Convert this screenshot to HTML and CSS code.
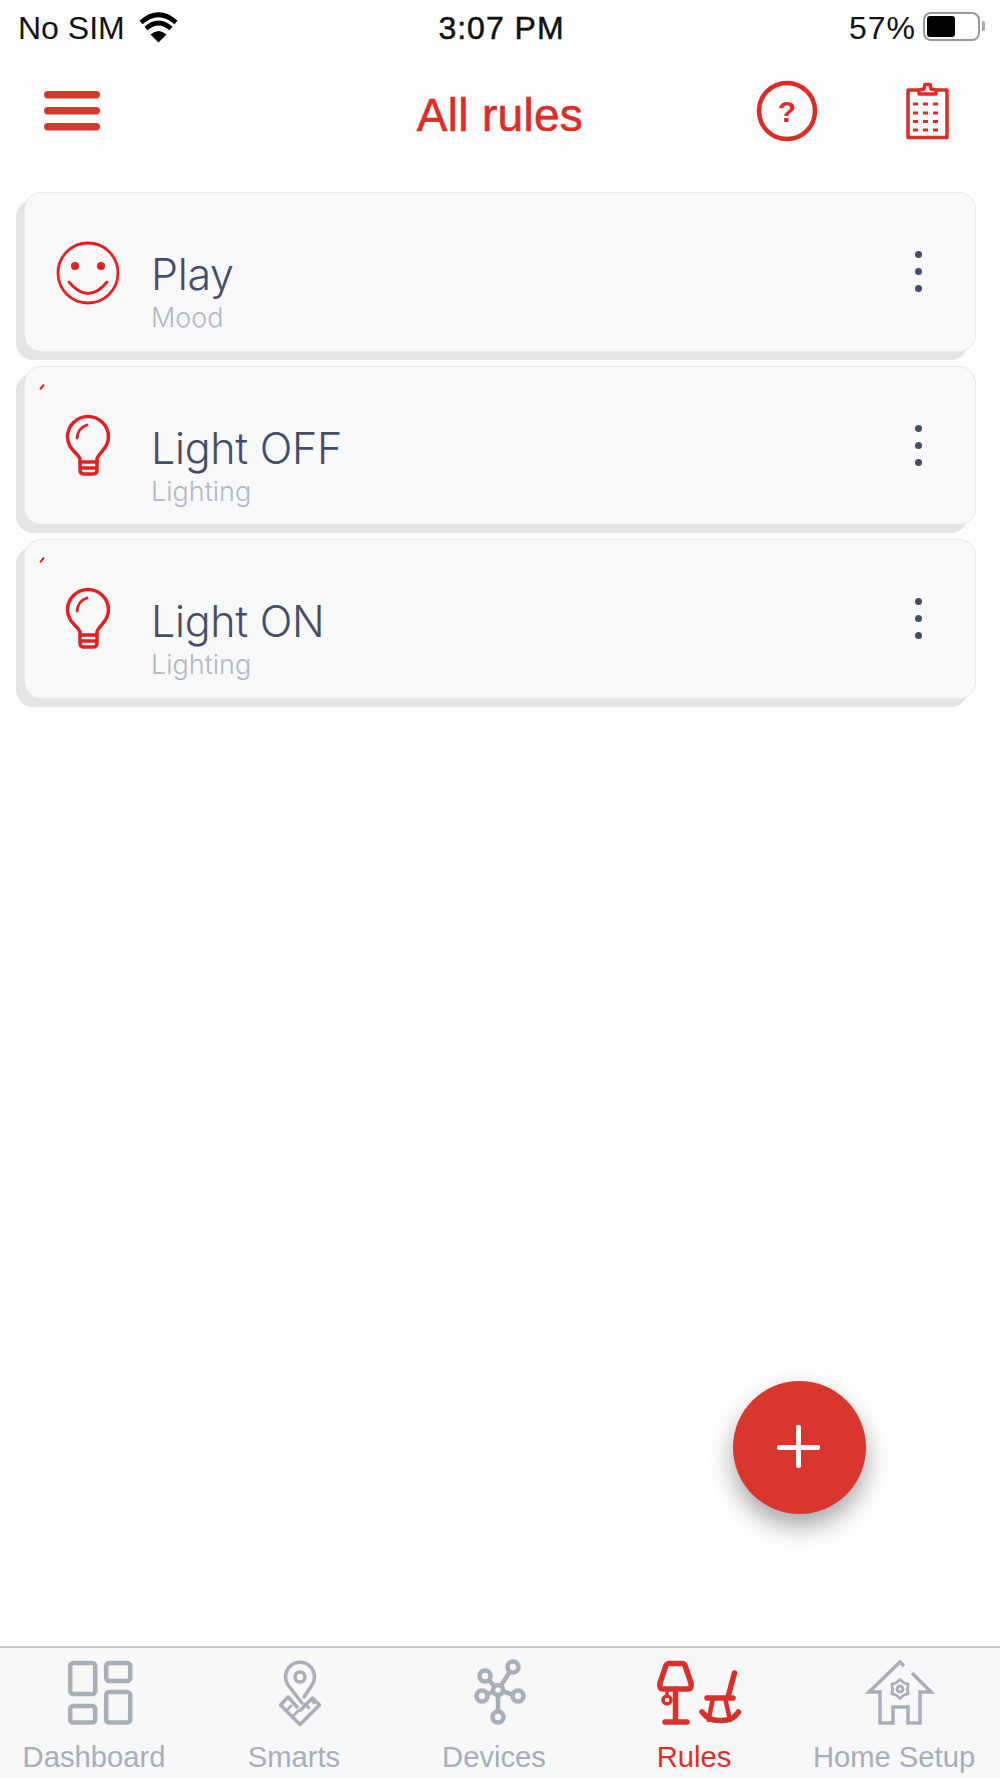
FILE: index.html
```html
<!DOCTYPE html>
<html lang="en">
<head>
<meta charset="utf-8">
<title>All rules</title>
<link rel="stylesheet" href="styles.css">
</head>
<body>
<div class="app">
  <div class="status-bar">
    <div class="status-left">
      <span>No SIM</span>
      <svg class="wifi" width="40" height="30" viewBox="139 12 40 30">
        <path class="wifi-fill" d="M158.500 41.500 L150.500 33.500 Q158.500 26.500 166.500 33.500 Z"/>
        <path class="wifi-arc" d="M146 27.500 Q158.500 16.500 171 27.500"/>
        <path class="wifi-arc" d="M141 21.500 Q158.500 6 176 21.500"/>
      </svg>
    </div>
    <div class="status-time">3:07 PM</div>
    <div class="status-right">
      <span>57%</span>
      <div class="battery"><div class="battery-level"></div></div>
      <div class="battery-nub"></div>
    </div>
  </div>

  <header class="top-bar">
    <div class="top-left">
      <svg class="menu-icon" width="56" height="42" viewBox="44 90 56 42">
        <rect class="menu-bar" x="44" y="91" width="56" height="7.500" rx="3.700"/>
        <rect class="menu-bar" x="44" y="107" width="56" height="7.500" rx="3.700"/>
        <rect class="menu-bar" x="44" y="123" width="56" height="7.500" rx="3.700"/>
      </svg>
    </div>
    <h1 class="title">All rules</h1>
    <div class="top-right">
      <svg class="help-icon" width="60" height="60" viewBox="757 81 60 60">
        <circle class="line-red line-4" cx="787" cy="111" r="28"/>
        <text class="help-mark" x="787" y="122">?</text>
      </svg>
      <svg class="sheet-icon" width="46" height="58" viewBox="905 82 46 58">
        <path class="line-red line-3" d="M918 90 H908 V137.500 H947 V90 H937"/>
        <path class="line-red line-3" d="M919 94 V90 L924 89 L925 84.500 H930 L931 89 L936 90 V94 Z"/>
        <path class="line-red line-2 dashes" d="M913 104 H943"/>
        <path class="line-red line-2 dashes" d="M913 113 H943"/>
        <path class="line-red line-2 dashes" d="M913 121.500 H943"/>
        <path class="line-red line-2 dashes" d="M913 130 H943"/>
      </svg>
    </div>
  </header>

  <main class="content">
    <ul class="rule-list">
      <li class="rule-card">
        <div class="rule-icon">
          <svg class="smile-icon" width="66" height="66" viewBox="55 239 66 66">
            <circle class="line-bright line-2" cx="88" cy="272" r="30"/>
            <circle class="dot-red" cx="75" cy="265" r="4"/>
            <circle class="dot-red" cx="101" cy="265" r="4"/>
            <path class="line-bright line-2" d="M69 281 Q88 304 107 281"/>
          </svg>
        </div>
        <div class="rule-text">
          <div class="rule-name">Play</div>
          <div class="rule-type">Mood</div>
        </div>
        <div class="rule-more"><span class="more-dot"></span><span class="more-dot"></span><span class="more-dot"></span></div>
      </li>
      <li class="rule-card">
        <span class="rule-tick"></span>
        <div class="rule-icon">
          <svg class="bulb-icon" width="54" height="66" viewBox="61 586 54 66">
            <path class="line-bright line-3" d="M80 634 V631 C78 625 67.500 621 67.500 609 A20.500 20.500 0 0 1 108.500 609 C108.500 621 98 625 97 631 V634 Z"/>
            <path class="line-bright line-3" d="M80 634 V642 Q80 646 84 646 H93 Q97 646 97 642 V634 M80 640 H97"/>
            <path class="line-bright line-2" d="M77 610 Q78 600 87 597"/>
          </svg>
        </div>
        <div class="rule-text">
          <div class="rule-name">Light OFF</div>
          <div class="rule-type">Lighting</div>
        </div>
        <div class="rule-more"><span class="more-dot"></span><span class="more-dot"></span><span class="more-dot"></span></div>
      </li>
      <li class="rule-card">
        <span class="rule-tick"></span>
        <div class="rule-icon">
          <svg class="bulb-icon" width="54" height="66" viewBox="61 586 54 66">
            <path class="line-bright line-3" d="M80 634 V631 C78 625 67.500 621 67.500 609 A20.500 20.500 0 0 1 108.500 609 C108.500 621 98 625 97 631 V634 Z"/>
            <path class="line-bright line-3" d="M80 634 V642 Q80 646 84 646 H93 Q97 646 97 642 V634 M80 640 H97"/>
            <path class="line-bright line-2" d="M77 610 Q78 600 87 597"/>
          </svg>
        </div>
        <div class="rule-text">
          <div class="rule-name">Light ON</div>
          <div class="rule-type">Lighting</div>
        </div>
        <div class="rule-more"><span class="more-dot"></span><span class="more-dot"></span><span class="more-dot"></span></div>
      </li>
    </ul>
    <button class="fab" type="button" aria-label="Add rule"><span class="fab-h"></span><span class="fab-v"></span></button>
  </main>

  <nav class="tab-bar">
    <div class="tab">
      <svg width="100" height="70" viewBox="50 1658 100 70">
        <rect class="line-grey line-thick" x="70.200" y="1663" width="25" height="31" rx="3"/>
        <rect class="line-grey line-thick" x="106.200" y="1663" width="24" height="18" rx="3"/>
        <rect class="line-grey line-thick" x="70.200" y="1706" width="25" height="16.500" rx="3"/>
        <rect class="line-grey line-thick" x="106.200" y="1692" width="24" height="30.500" rx="3"/>
      </svg>
      <span class="tab-label">Dashboard</span>
    </div>
    <div class="tab">
      <svg width="100" height="70" viewBox="250 1658 100 70">
        <path class="line-grey line-3" d="M304 1697 L312 1685 A14.500 14.500 0 1 0 288 1685 L302 1703"/>
        <circle class="line-grey line-3" cx="300" cy="1677" r="5"/>
        <path class="line-grey line-3" d="M288 1697 L280.500 1705 L300 1724.500 L319.500 1705 L312.500 1698 L300 1710.500 M288 1697 L297 1707"/>
        <path class="line-grey line-2" d="M286 1711 L291 1706 M292 1717 L298 1711 M309 1708 L305 1704 M314 1703 L311 1700"/>
      </svg>
      <span class="tab-label">Smarts</span>
    </div>
    <div class="tab">
      <svg width="100" height="70" viewBox="450 1658 100 70">
        <path class="line-grey line-thick" d="M498 1690 L513 1667 M498 1690 L485 1676 M498 1690 L482 1696 M498 1690 L518 1696 M498 1690 L498 1717"/>
        <circle class="grey-node" cx="498" cy="1690" r="5"/>
        <circle class="grey-node" cx="513" cy="1667" r="5.500"/>
        <circle class="grey-node" cx="485" cy="1676" r="5.500"/>
        <circle class="grey-node" cx="482" cy="1696" r="5.500"/>
        <circle class="grey-node" cx="518" cy="1696" r="5.500"/>
        <circle class="grey-node" cx="498" cy="1717" r="5.500"/>
      </svg>
      <span class="tab-label">Devices</span>
    </div>
    <div class="tab tab-active">
      <svg width="100" height="70" viewBox="650 1658 100 70">
        <path class="line-tab line-heavy" d="M669 1663.500 H682 Q684 1663.500 685 1665.500 L691 1683 Q692 1689 688 1689 H663 Q659 1689 660 1683 L666 1665.500 Q667 1663.500 669 1663.500 Z"/>
        <path class="line-tab line-heavy" d="M675.500 1689 V1721 M665 1722 H687"/>
        <path class="line-tab line-3" d="M667 1689 V1696"/>
        <circle class="line-tab line-3" cx="667" cy="1700" r="4"/>
        <path class="line-tab line-heavy" d="M734.500 1673 L728 1697 M707 1698 H733"/>
        <path class="line-tab line-thick" d="M713 1698 L708.500 1720 M725 1698 L730 1720"/>
        <path class="line-tab line-heavy" d="M702 1712 Q709 1721 720 1720.500 Q733 1721 738.500 1712"/>
      </svg>
      <span class="tab-label">Rules</span>
    </div>
    <div class="tab">
      <svg width="100" height="70" viewBox="850 1658 100 70">
        <path class="line-grey line-3 cap-square" d="M904 1666 L900 1662 L869 1692 H880 V1723 H893 V1707 H908 V1723 H920 V1692 H931 L912 1673"/>
        <path class="line-grey line-2" d="M900 1679.500 L903.700 1682.700 L908.200 1684.300 L907.300 1689 L908.200 1693.700 L903.700 1695.300 L900 1698.500 L896.300 1695.300 L891.800 1693.700 L892.700 1689 L891.800 1684.300 L896.300 1682.700 Z"/>
        <circle class="line-grey line-2" cx="900" cy="1689" r="3"/>
      </svg>
      <span class="tab-label">Home Setup</span>
    </div>
  </nav>
</div>
</body>
</html>
```
FILE: styles.css
```css
* { box-sizing: border-box; }
html, body { margin: 0; padding: 0; }
body { background: #fefefe; font-family: "Liberation Sans", Arial, sans-serif; }
svg { display: block; overflow: visible; }

.app { width: 1000px; height: 1778px; display: flex; flex-direction: column; overflow: hidden; }

/* Status bar */
.status-bar { height: 56px; display: grid; grid-template-columns: 1fr auto 1fr; align-items: start; padding: 12px 15px 0 18px; font-size: 32px; line-height: 32px; color: #111; }
.status-left { display: flex; align-items: flex-start; gap: 14px; }
.wifi { margin-top: 1px; }
.wifi-fill { fill: #000; }
.wifi-arc { fill: none; stroke: #000; stroke-width: 4.6; }
.status-time { font-size: 32px; letter-spacing: 1px; -webkit-text-stroke: 0.5px #111; }
.status-right { display: flex; justify-content: flex-end; align-items: flex-start; letter-spacing: 1px; }
.battery { width: 57px; height: 29px; margin-left: 7px; border: 2px solid #999; border-radius: 8px; padding: 2px; }
.battery-level { width: 28px; height: 21px; background: #000; border-radius: 3px; }
.battery-nub { width: 3px; height: 10px; margin: 9px 0 0 2px; background: #aaa; border-radius: 0 2px 2px 0; }

/* Header */
.top-bar { height: 110px; display: grid; grid-template-columns: 1fr auto 1fr; align-items: start; padding: 0 44px; }
.menu-icon { margin-top: 34px; }
.menu-bar { fill: #d9352f; }
.title { margin: 33px 0 0; font-size: 46px; line-height: 52px; font-weight: 400; letter-spacing: 0.3px; color: #de2c28; -webkit-text-stroke: 0.6px #de2c28; }
.top-right { display: flex; justify-content: flex-end; align-items: flex-start; gap: 88px; margin-right: 5px; }
.help-icon { margin-top: 25px; }
.sheet-icon { margin-top: 26px; }
.help-mark { font-family: "Liberation Sans", Arial, sans-serif; font-weight: 700; font-size: 30px; fill: #de2c28; text-anchor: middle; }

/* Shared icon strokes */
.line-red, .line-bright, .line-grey, .line-tab { fill: none; stroke-linecap: round; stroke-linejoin: round; }
.line-red { stroke: #de2c28; }
.line-bright { stroke: #e12222; }
.line-grey { stroke: #a9aeb8; }
.line-tab { stroke: #da302c; }
.line-2 { stroke-width: 2.8; }
.line-3 { stroke-width: 3.5; }
.line-4 { stroke-width: 4.5; }
.line-thick { stroke-width: 4.5; }
.line-heavy { stroke-width: 5.5; }
.dashes { stroke-dasharray: 5 5; stroke-linecap: butt; }
.cap-square { stroke-linecap: butt; stroke-linejoin: miter; }
.dot-red { fill: #e12222; }
.grey-node { fill: #f8f8f8; stroke: #a9aeb8; stroke-width: 4.5; }

/* Rules list */
.content { flex: 1; position: relative; padding-top: 26px; }
.rule-list { list-style: none; margin: 0 0 0 24px; padding: 0; width: 952px; display: flex; flex-direction: column; gap: 14px; }
.rule-card { position: relative; height: 159.500px; display: flex; align-items: flex-start; background: #f9f9f9; border: 1px solid #e7e7e9; border-radius: 17px; box-shadow: -8px 8px 0 #e4e5e7; padding-left: 15px; }
.rule-icon { width: 96px; display: flex; justify-content: center; flex: none; margin-top: 47px; }
.rule-text { margin: 59px 0 0 15px; flex: 1; }
.rule-name { font-family: Inter, "Liberation Sans", sans-serif; font-weight: 300; font-size: 43px; line-height: 44px; letter-spacing: -0.300px; color: #454e68; }
.rule-type { font-family: Inter, "Liberation Sans", sans-serif; font-weight: 300; font-size: 27px; line-height: 32px; margin-top: 6px; color: #b3b8c3; }
.rule-more { align-self: center; display: flex; flex-direction: column; gap: 10px; margin-right: 53px; }
.more-dot { width: 7px; height: 7px; border-radius: 50%; background: #454e68; }
.rule-tick { position: absolute; left: 14px; top: 19px; width: 6px; height: 2px; background: #e11d1d; transform: rotate(-50deg); }

/* Floating action button */
.fab { position: absolute; right: 134px; bottom: 132px; width: 133px; height: 133px; padding: 0; border: 0; border-radius: 50%; background: #d9372e; box-shadow: 0 12px 24px rgba(0, 0, 0, 0.35); }
.fab-h { position: absolute; left: 44px; top: 64px; width: 43px; height: 5px; border-radius: 2px; background: #fff; }
.fab-v { position: absolute; left: 63px; top: 44px; width: 5px; height: 43px; border-radius: 2px; background: #fff; }

/* Tab bar */
.tab-bar { height: 132px; display: grid; grid-template-columns: repeat(5, 1fr); background: #f8f8f8; border-top: 2px solid #c9c9c9; padding-top: 10px; }
.tab { display: flex; flex-direction: column; align-items: center; }
.tab-label { margin: 11px 12px 0 0; font-size: 29.200px; line-height: 36px; color: #a9aeb8; white-space: nowrap; }
.tab-active .tab-label { color: #da302c; }
```
